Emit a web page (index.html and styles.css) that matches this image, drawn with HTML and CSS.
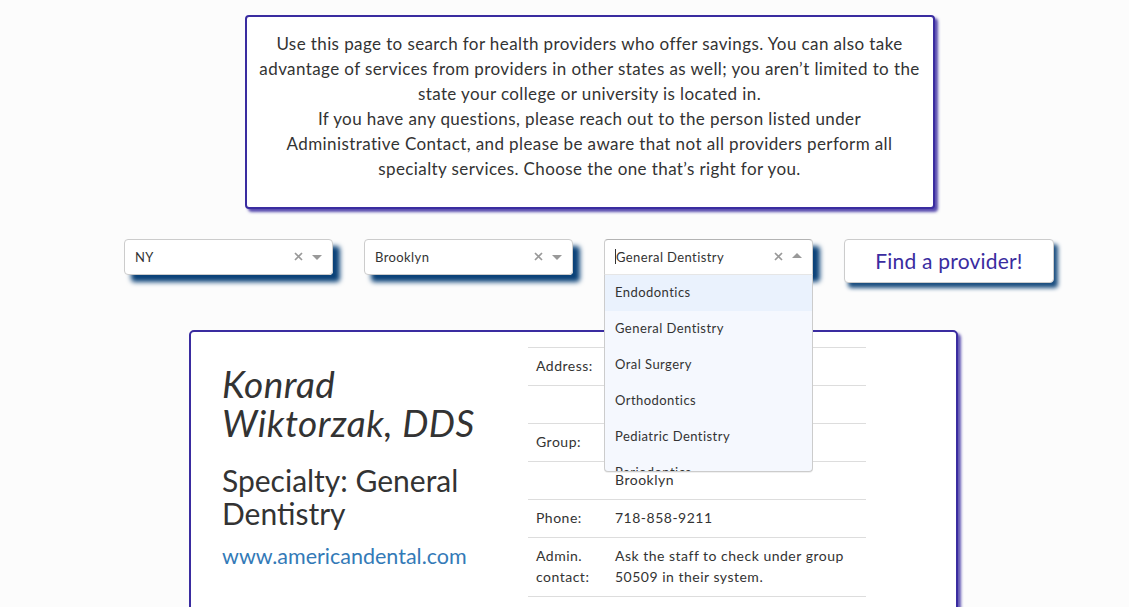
FILE: index.html
```html
<!DOCTYPE html>
<html lang="en">
<head>
<meta charset="utf-8">
<title>Find a provider</title>
<link rel="stylesheet" href="styles.css">
</head>
<body>
<main class="page">
  <section class="intro">
    <p>Use this page to search for health providers who offer savings. You can also take<br>advantage of services from providers in other states as well; you aren’t limited to the<br>state your college or university is located in.</p>
    <p>If you have any questions, please reach out to the person listed under<br>Administrative Contact, and please be aware that not all providers perform all<br>specialty services. Choose the one that’s right for you.</p>
  </section>

  <section class="filters">
    <div class="select">
      <div class="select-control">
        <span class="select-value">NY</span>
        <span class="select-clear"><svg width="9" height="9" viewBox="0 0 9 9"><path d="M1 1L8 8M8 1L1 8" stroke="#999" stroke-width="1.7" fill="none"/></svg></span>
        <span class="select-arrow down"></span>
      </div>
    </div>
    <div class="select">
      <div class="select-control">
        <span class="select-value">Brooklyn</span>
        <span class="select-clear"><svg width="9" height="9" viewBox="0 0 9 9"><path d="M1 1L8 8M8 1L1 8" stroke="#999" stroke-width="1.7" fill="none"/></svg></span>
        <span class="select-arrow down"></span>
      </div>
    </div>
    <div class="select is-open">
      <div class="select-control">
        <span class="select-value"><span class="caret"></span>General Dentistry</span>
        <span class="select-clear"><svg width="9" height="9" viewBox="0 0 9 9"><path d="M1 1L8 8M8 1L1 8" stroke="#999" stroke-width="1.7" fill="none"/></svg></span>
        <span class="select-arrow up"></span>
      </div>
      <ul class="select-menu">
        <li class="option focused">Endodontics</li>
        <li class="option">General Dentistry</li>
        <li class="option">Oral Surgery</li>
        <li class="option">Orthodontics</li>
        <li class="option">Pediatric Dentistry</li>
        <li class="option">Periodontics</li>
        <li class="option">Prosthodontics</li>
      </ul>
    </div>
    <button class="find-btn" type="button">Find a provider!</button>
  </section>

  <section class="card">
    <div class="card-main">
      <h1 class="provider-name">Konrad Wiktorzak, DDS</h1>
      <h2 class="provider-specialty">Specialty: General Dentistry</h2>
      <h3 class="provider-site"><a href="#">www.americandental.com</a></h3>
    </div>
    <table class="details">
      <tbody>
        <tr><td class="label">Address:</td><td>&nbsp;</td></tr>
        <tr><td class="label">&nbsp;</td><td>&nbsp;</td></tr>
        <tr><td class="label">Group:</td><td>&nbsp;</td></tr>
        <tr><td class="label">&nbsp;</td><td>Brooklyn</td></tr>
        <tr><td class="label">Phone:</td><td>718-858-9211</td></tr>
        <tr><td class="label">Admin. contact:</td><td>Ask the staff to check under group 50509 in their system.</td></tr>
      </tbody>
    </table>
  </section>
</main>
</body>
</html>
```

FILE: styles.css
```css
* { box-sizing: border-box; }

body {
  margin: 0;
  background: #fcfcfc;
  color: #333;
  font-family: Lato, "Open Sans", sans-serif;
}

.page {
  width: 931px;
  margin-left: 124px;
  padding-top: 15px;
}

.intro {
  width: 690px;
  margin: 0 auto;
  background: #fff;
  border: 2px solid #3a2ca0;
  border-radius: 4px;
  box-shadow: 3px 3px 3px rgba(58, 44, 160, 0.85);
  padding: 14px 6px 26px;
  text-align: center;
  font-size: 17px;
  letter-spacing: 0.4px;
  line-height: 25px;
}

.intro p { margin: 0; }

.filters {
  display: flex;
  gap: 31px;
  margin-top: 30px;
  align-items: flex-start;
}

.select {
  position: relative;
  width: 209px;
  box-shadow: 7px 7px 5px #0b4278;
  border-radius: 4px;
}

.select-control {
  display: flex;
  align-items: center;
  height: 36px;
  background: #fff;
  border: 1px solid #ccc;
  border-radius: 4px;
  padding: 0 0 1px 10px;
  font-size: 13px;
  letter-spacing: 0.4px;
  color: #333;
}

.select.is-open .select-control {
  border-radius: 4px 4px 0 0;
  border-color: #b3b3b3 #ccc #d9d9d9;
}

.select-value {
  flex: 1;
  display: flex;
  align-items: center;
}

.caret {
  display: inline-block;
  width: 1px;
  height: 15px;
  background: #333;
}

.select-clear {
  width: 17px;
  display: flex;
  justify-content: center;
  align-items: center;
}

.select-arrow {
  width: 25px;
  padding-right: 5px;
  display: flex;
  justify-content: center;
}

.select-arrow::before {
  content: "";
  border-style: solid;
  width: 0;
  height: 0;
}

.select-arrow.down::before {
  border-color: #999 transparent transparent;
  border-width: 5px 5px 2.5px;
  margin-top: 3px;
}

.select-arrow.up::before {
  border-color: transparent transparent #999;
  border-width: 0 5px 5px;
  margin-top: -3px;
}

.select-menu {
  position: absolute;
  top: 100%;
  left: 0;
  width: 100%;
  margin: -1px 0 0;
  padding: 0;
  list-style: none;
  max-height: 198px;
  overflow: hidden;
  background: #f5f8fe;
  border: 1px solid #ccc;
  border-top-color: #e6e6e6;
  border-radius: 0 0 4px 4px;
  box-shadow: 0 1px 0 rgba(0, 0, 0, 0.06);
  z-index: 10;
}

.option {
  padding: 7px 10px 9px;
  font-size: 13px;
  letter-spacing: 0.45px;
  line-height: 20px;
  color: #333;
}

.option.focused { background: #eaf2fd; }

.find-btn {
  width: 210px;
  height: 44px;
  padding-bottom: 2px;
  background: #fff;
  border: 1px solid #ccc;
  border-radius: 4px;
  box-shadow: 4px 5px 4px #1c4f80;
  font-family: inherit;
  font-size: 21px;
  letter-spacing: 0.2px;
  color: #3a2ca0;
  cursor: pointer;
}

.card {
  display: flex;
  width: 769px;
  margin: 47px 0 0 65px;
  padding: 15px 0 60px;
  background: #fff;
  border: 2px solid #3a2ca0;
  border-radius: 5px;
  box-shadow: 3px 3px 3px rgba(58, 44, 160, 0.8);
}

.card-main {
  width: 337px;
  padding: 0 15px 0 31px;
}

.provider-name {
  max-width: 268px;
  margin: 17px 0 10px;
  font-size: 37px;
  letter-spacing: 0.5px;
  font-weight: 400;
  font-style: italic;
  line-height: 39px;
}

.provider-specialty {
  margin: 22px 0 0;
  font-size: 30px;
  font-weight: 400;
  line-height: 33px;
}

.provider-site {
  margin: 14px 0 0;
  font-size: 21.5px;
  font-weight: 400;
  line-height: 1.2;
}

.provider-site a {
  color: #337ab7;
  text-decoration: none;
}

.details {
  width: 338px;
  table-layout: fixed;
  border-collapse: collapse;
  font-size: 14px;
  letter-spacing: 0.5px;
  line-height: 21px;
  align-self: flex-start;
}

.details td {
  padding: 7px 8px 9px;
  border-top: 1px solid #ddd;
  vertical-align: top;
}

.details tr:last-child td { border-bottom: 1px solid #ddd; }

.details .label { width: 79px; }
```
